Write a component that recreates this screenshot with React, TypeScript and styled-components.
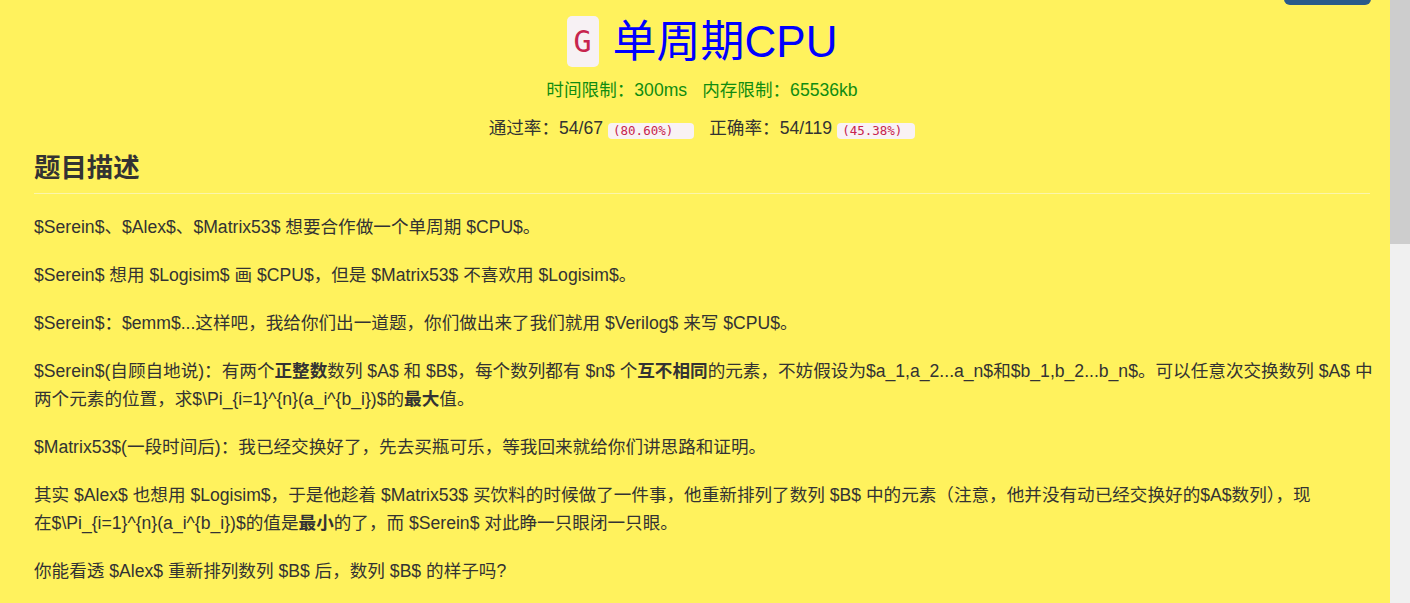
import React from "react";
import styled, { createGlobalStyle } from "styled-components";

const GlobalStyle = createGlobalStyle`
  html, body {
    margin: 0;
    padding: 0;
    overflow: hidden;
  }
  body {
    background: #fff25d;
    font-family: "Liberation Sans", Arial, "Noto Sans CJK SC", sans-serif;
    color: #333;
  }
`;

const Shell = styled.div`
  display: flex;
  height: 100vh;
  overflow: hidden;
`;

const Main = styled.main`
  position: relative;
  flex: 1;
  min-width: 0;
  background: #fff25d;
  padding: 14px 0 0 34px;
  box-sizing: border-box;
  overflow: hidden;
`;

const ScrollTrack = styled.div`
  flex: 0 0 20px;
  background: #f0f0f0;
`;

const ScrollThumb = styled.div`
  height: 244px;
  background: #cdcdcd;
`;

const TopButton = styled.button`
  position: absolute;
  top: -30px;
  right: 19px;
  width: 87px;
  height: 35px;
  border: none;
  border-radius: 6px;
  background: #2a5b8a;
`;

const Header = styled.header`
  display: flex;
  flex-direction: column;
  align-items: center;
  margin-right: 20px;
`;

const TitleRow = styled.div`
  display: flex;
  align-items: center;
  gap: 14px;
  height: 55px;
`;

const Badge = styled.span`
  display: inline-flex;
  align-items: center;
  justify-content: center;
  width: 32px;
  height: 51px;
  border-radius: 5px;
  background: #f7f1f4;
  color: #c7254e;
  font-family: "DejaVu Sans Mono", "Liberation Mono", monospace;
  font-size: 30px;
`;

const Title = styled.h1`
  margin: 0;
  font-size: 44px;
  font-weight: normal;
  color: #0000ff;
  line-height: 55px;
`;

const InfoLine = styled.div<{ $color?: string; $top: number }>`
  margin-top: ${(p) => p.$top}px;
  line-height: 22px;
  font-size: 17.6px;
  text-align: center;
  white-space: nowrap;
  color: ${(p) => p.$color || "#333"};
`;

const Stat = styled.span`
  & + & {
    margin-left: 15px;
  }
`;

const Code = styled.code<{ $tail: number }>`
  display: inline-block;
  margin-left: 5px;
  height: 16px;
  line-height: 16px;
  padding: 0 ${(p) => p.$tail}px 0 5px;
  border-radius: 4px;
  background: #f9f2f4;
  color: #c7254e;
  font-family: "DejaVu Sans Mono", "Liberation Mono", monospace;
  font-size: 12.5px;
  vertical-align: -1px;
`;

const SectionTitle = styled.h3`
  margin: 13px 20px 0 0;
  padding-bottom: 9px;
  border-bottom: 1px solid #fbf5ac;
  font-size: 26.4px;
  line-height: 32px;
  font-weight: bold;
  color: #333;
`;

const Body = styled.div`
  padding-top: 19px;
`;

const Para = styled.p`
  margin: 0 0 20px;
  font-size: 17.6px;
  line-height: 28px;
  color: #333;
`;

const Formula = styled.span`
  white-space: nowrap;
`;

export default function App() {
  return (
    <>
      <GlobalStyle />
      <Shell>
        <Main>
          <TopButton aria-label="menu" />
          <Header>
            <TitleRow>
              <Badge>G</Badge>
              <Title>单周期CPU</Title>
            </TitleRow>
            <InfoLine $color="#108c10" $top={10}>
              <Stat>时间限制：300ms</Stat>
              <Stat>内存限制：65536kb</Stat>
            </InfoLine>
            <InfoLine $top={16}>
              <Stat>
                通过率：54/67<Code $tail={21}>(80.60%)</Code>
              </Stat>
              <Stat>
                正确率：54/119<Code $tail={13}>(45.38%)</Code>
              </Stat>
            </InfoLine>
          </Header>

          <SectionTitle>题目描述</SectionTitle>
          <Body>
            <Para>$Serein$、$Alex$、$Matrix53$ 想要合作做一个单周期 $CPU$。</Para>
            <Para>$Serein$ 想用 $Logisim$ 画 $CPU$，但是 $Matrix53$ 不喜欢用 $Logisim$。</Para>
            <Para>$Serein$：$emm$...这样吧，我给你们出一道题，你们做出来了我们就用 $Verilog$ 来写 $CPU$。</Para>
            <Para>
              $Serein$(自顾自地说)：有两个<b>正整数</b>数列 $A$ 和 $B$，每个数列都有 $n$ 个<b>互不相同</b>
              的元素，不妨假设为$a_1,a_2...a_n$和$b_1,b_2...b_n$。可以任意次交换数列 $A$ 中两个元素的位置，求$\Pi_{"{i=1}"}^{"{n}"}(a_i^{"{b_i}"})$的<b>最大</b>值。
            </Para>
            <Para>$Matrix53$(一段时间后)：我已经交换好了，先去买瓶可乐，等我回来就给你们讲思路和证明。</Para>
            <Para>
              其实 $Alex$ 也想用 $Logisim$，于是他趁着 $Matrix53$ 买饮料的时候做了一件事，他重新排列了数列 $B$ 中的元素（注意，他并没有动已经交换好的$A$数列），现
              <Formula>在$\Pi_{"{i=1}"}^{"{n}"}(a_i^{"{b_i}"})$</Formula>的值是<b>最小</b>的了，而 $Serein$ 对此睁一只眼闭一只眼。
            </Para>
            <Para>你能看透 $Alex$ 重新排列数列 $B$ 后，数列 $B$ 的样子吗?</Para>
          </Body>
        </Main>
        <ScrollTrack>
          <ScrollThumb />
        </ScrollTrack>
      </Shell>
    </>
  );
}
